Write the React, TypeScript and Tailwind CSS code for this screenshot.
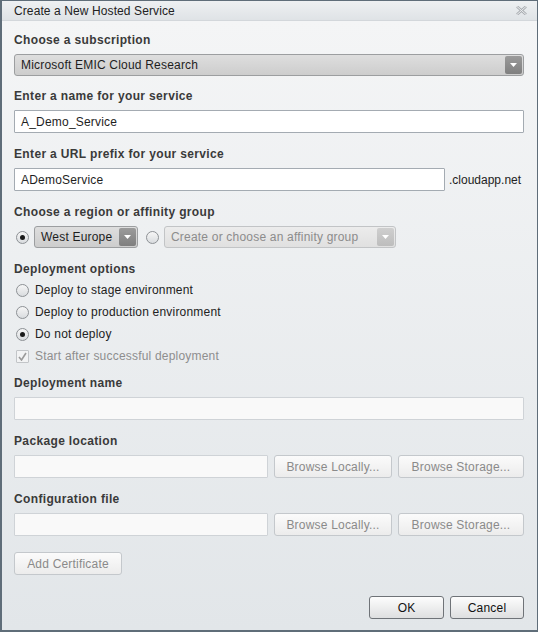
import type { ReactNode } from 'react'

const font = { fontFamily: '"Liberation Sans", Arial, sans-serif' }

function Label({ children, className = '' }: { children: ReactNode; className?: string }) {
  return (
    <div className={`h-4 text-[12px] leading-4 font-bold tracking-[0.35px] text-[#3a3a3a] ${className}`}>{children}</div>
  )
}

function Arrow({ disabled }: { disabled?: boolean }) {
  return (
    <div
      className={`flex h-[18px] w-[17px] items-center justify-center rounded-[2px] ${
        disabled ? 'bg-gradient-to-b from-[#cfcfcf] to-[#bdbdbd]' : 'bg-gradient-to-b from-[#9b9b9b] to-[#7f7f7f]'
      }`}
    >
      <svg width="7" height="4" viewBox="0 0 7 4">
        <path d="M0 0h7L3.5 4z" fill="#fff" />
      </svg>
    </div>
  )
}

function Select({ value, disabled, className = '' }: { value: string; disabled?: boolean; className?: string }) {
  return (
    <div
      className={`flex h-[22px] items-center justify-between rounded-[3px] border pl-[6px] pr-[1px] text-[12px] ${
        disabled
          ? 'border-[#c2c4c6] bg-gradient-to-b from-[#ececec] to-[#e0e0e0] text-[#8c8c8c]'
          : 'border-[#9c9ea0] bg-gradient-to-b from-[#dedede] to-[#cdcdcd] text-[#1e1e1e]'
      } ${className}`}
    >
      <span>{value}</span>
      <Arrow disabled={disabled} />
    </div>
  )
}

function Input({ value = '', disabled, className = '' }: { value?: string; disabled?: boolean; className?: string }) {
  return (
    <div
      className={`flex h-[23px] items-center rounded-[1px] border px-[6px] text-[12px] text-[#1e1e1e] ${
        disabled ? 'border-[#cfd3d7] bg-[#f9f9f9]' : 'border-[#a4abb2] bg-white'
      } ${className}`}
    >
      {value}
    </div>
  )
}

function Radio({ checked }: { checked?: boolean }) {
  return (
    <div className="flex h-[13px] w-[13px] shrink-0 items-center justify-center rounded-full border border-[#8d9195] bg-gradient-to-b from-[#f6f6f6] to-[#d9dcdf]">
      {checked && <div className="h-[5px] w-[5px] rounded-full bg-[#1a1a1a]" />}
    </div>
  )
}

function Btn({ children, disabled, className = '' }: { children: ReactNode; disabled?: boolean; className?: string }) {
  return (
    <div
      className={`flex h-[23px] items-center justify-center rounded-[3px] border text-[12px] ${
        disabled
          ? 'border-[#c4c8cc] bg-gradient-to-b from-[#fbfbfb] to-[#ececec] text-[#8a8a8a]'
          : 'border-[#6f7378] bg-gradient-to-b from-[#fdfdfd] to-[#dedfe0] text-[#111]'
      } ${className}`}
    >
      {children}
    </div>
  )
}

function RadioRow({ label, checked }: { label: string; checked?: boolean }) {
  return (
    <div className="flex h-[22px] items-center gap-[6px] pl-[2px] text-[12px] text-[#222]">
      <Radio checked={checked} />
      <span>{label}</span>
    </div>
  )
}

export default function App() {
  return (
    <div className="h-[632px] w-[538px] overflow-hidden tracking-[0.2px]" style={font}>
      <div className="flex h-full flex-col border border-[#5f6d79] border-l-2 border-b-2">
        <div className="flex h-[20px] shrink-0 items-center justify-between border-b border-[#d3d7db] bg-gradient-to-b from-[#eef0f2] to-[#dfe3e6] pl-[12px] pr-[10px]">
          <span className="text-[12px] tracking-[0.1px] text-[#222]">Create a New Hosted Service</span>
          <svg width="11" height="9" viewBox="0 0 11 9">
            <path d="M1 0.5L10 8.5M10 0.5L1 8.5" stroke="#a9adb1" strokeWidth="2.6" />
            <path d="M1 0.5L10 8.5M10 0.5L1 8.5" stroke="#eceeef" strokeWidth="1" />
          </svg>
        </div>
        <div className="flex flex-1 flex-col bg-gradient-to-b from-[#f4f5f6] to-[#e2e6e9] pl-[12px] pr-[13px]">
          <Label className="mt-[11px]">Choose a subscription</Label>
          <Select value="Microsoft EMIC Cloud Research" className="mt-[6px]" />

          <Label className="mt-[12px]">Enter a name for your service</Label>
          <Input value="A_Demo_Service" className="mt-[6px]" />

          <Label className="mt-[13px]">Enter a URL prefix for your service</Label>
          <div className="mt-[6px] flex items-center">
            <Input value="ADemoService" className="w-[431px]" />
            <span className="ml-[4px] text-[12px] tracking-normal text-[#222]">.cloudapp.net</span>
          </div>

          <Label className="mt-[13px]">Choose a region or affinity group</Label>
          <div className="mt-[6px] flex h-[22px] items-center">
            <div className="ml-[2px]">
              <Radio checked />
            </div>
            <Select value="West Europe" className="ml-[5px] w-[104px]" />
            <div className="ml-[8px]">
              <Radio />
            </div>
            <Select value="Create or choose an affinity group" disabled className="ml-[5px] w-[232px]" />
          </div>

          <Label className="mt-[13px]">Deployment options</Label>
          <div className="mt-[2px] flex flex-col">
            <RadioRow label="Deploy to stage environment" />
            <RadioRow label="Deploy to production environment" />
            <RadioRow label="Do not deploy" checked />
            <div className="flex h-[22px] items-center gap-[6px] pl-[2px] text-[12px] text-[#8e8e8e]">
              <div className="flex h-[13px] w-[13px] items-center justify-center rounded-[1px] border border-[#c2c5c8] bg-[#f2f3f4]">
                <svg width="9" height="9" viewBox="0 0 9 9">
                  <path d="M1 5l2.5 3L8 1" fill="none" stroke="#9a9a9a" strokeWidth="1.6" />
                </svg>
              </div>
              <span>Start after successful deployment</span>
            </div>
          </div>

          <Label className="mt-[8px]">Deployment name</Label>
          <Input disabled className="mt-[6px]" />

          <Label className="mt-[13px]">Package location</Label>
          <div className="mt-[6px] flex">
            <Input disabled className="w-[254px]" />
            <Btn disabled className="ml-[6px] w-[118px]">Browse Locally...</Btn>
            <Btn disabled className="ml-[6px] flex-1">Browse Storage...</Btn>
          </div>

          <Label className="mt-[13px]">Configuration file</Label>
          <div className="mt-[6px] flex">
            <Input disabled className="w-[254px]" />
            <Btn disabled className="ml-[6px] w-[118px]">Browse Locally...</Btn>
            <Btn disabled className="ml-[6px] flex-1">Browse Storage...</Btn>
          </div>

          <Btn disabled className="mt-[16px] w-[108px]">Add Certificate</Btn>

          <div className="mt-[21px] flex justify-end gap-[6px]">
            <Btn className="w-[75px]">OK</Btn>
            <Btn className="w-[74px]">Cancel</Btn>
          </div>
        </div>
      </div>
    </div>
  )
}
